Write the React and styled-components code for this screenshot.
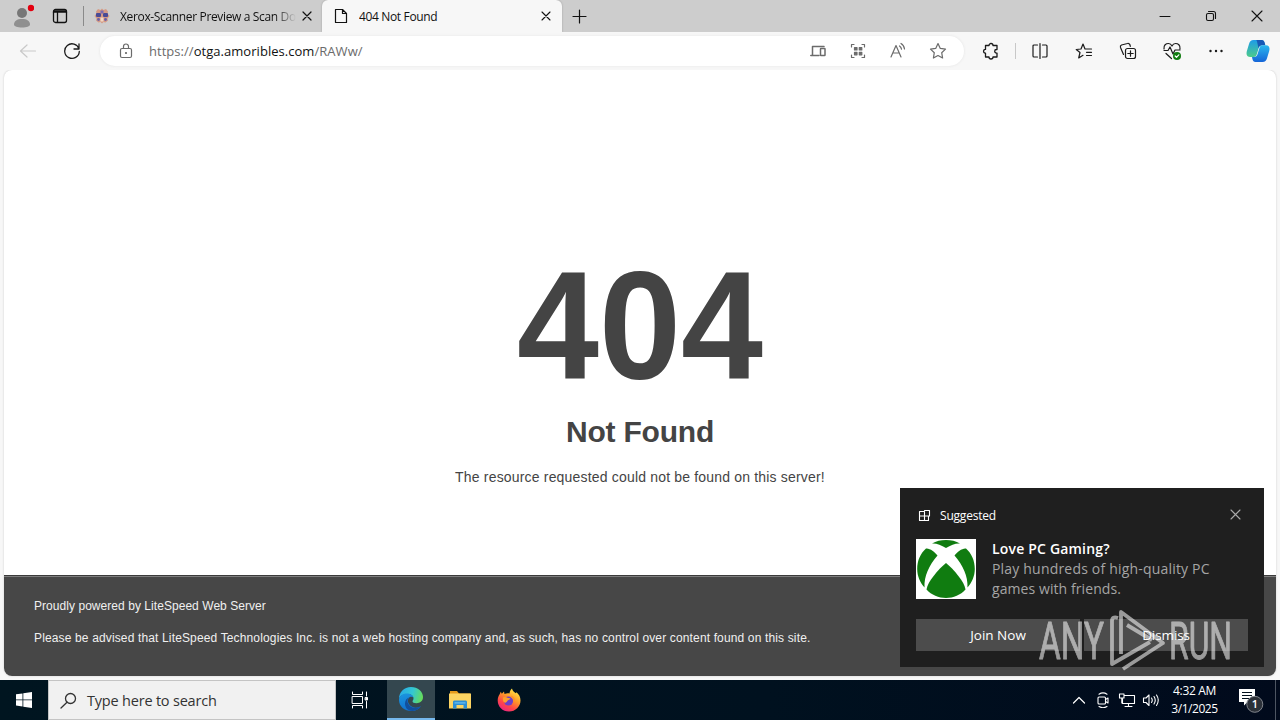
import React from 'react';
import styled, { createGlobalStyle } from 'styled-components';

const GlobalStyle = createGlobalStyle`
    * {
        box-sizing: border-box;
    }
    body {
        margin: 0;
        overflow: hidden;
        font-family: "Open Sans", "Noto Sans", sans-serif;
    }
    button {
        font-family: inherit;
    }
`

const Desktop = styled.div`
    width: 1280px;
    height: 720px;
    display: flex;
    flex-direction: column;
    position: relative;
    overflow: hidden;
    background-color: #f7f7f7;
`
const Slot = styled.div`
    width: ${({ $w }) => $w}px;
    height: 100%;
    flex-shrink: 0;
    display: flex;
    align-items: center;
    justify-content: center;
    color: ${({ $color }) => $color || 'inherit'};
`
const Label = styled.span`
    font-size: ${({ $size }) => $size || 12}px;
    letter-spacing: ${({ $spacing }) => $spacing || 0}px;
    color: ${({ $color }) => $color || 'inherit'};
    font-weight: ${({ $weight }) => $weight || 400};
    white-space: nowrap;
`

/* browser chrome */
const TabBar = styled.div`
    height: 32px;
    display: flex;
    background-color: #cdcdcd;
    color: #111;
`
const TabDivider = styled.div`
    width: 1px;
    height: 20px;
    margin: 6px 0 0 1px;
    background-color: #8a8a8a;
`
const Tab = styled.div`
    width: ${({ $w }) => $w}px;
    height: 32px;
    padding-left: ${({ $active }) => ($active ? 11 : 10)}px;
    display: flex;
    align-items: center;
    background-color: ${({ $active }) => ($active ? '#f7f7f7' : 'transparent')};
    border-radius: 6px 6px 0 0;
    box-shadow: ${({ $active }) => ($active ? '0 0 2px #999' : 'none')};
`
const TabTitle = styled.div`
    width: ${({ $w }) => $w}px;
    margin-left: ${({ $gap }) => $gap}px;
    overflow: hidden;
    display: flex;
    mask-image: ${({ $fade }) => ($fade ? 'linear-gradient(90deg, #000 88%, transparent)' : 'none')};
`
const WindowControls = styled.div`
    display: flex;
    margin-left: auto;
`
const Toolbar = styled.div`
    height: 38px;
    padding: 0 2px 0 6px;
    display: flex;
    align-items: center;
    background-color: #f7f7f7;
    color: #1b1b1b;
    position: relative;
`
const AddressBar = styled.div`
    width: 864px;
    height: 30px;
    margin: 0 5px 0 6px;
    padding: 0 6px;
    display: flex;
    align-items: center;
    border-radius: 15px;
    background-color: #fff;
    box-shadow: 0 0 3px #e4e4e4;
    color: #6b6b6b;
`
const Url = styled.div`
    margin-left: 3px;
    padding-bottom: 1px;
    flex: 1;
    line-height: 20px;
`
const ToolDivider = styled.div`
    width: 1px;
    height: 16px;
    margin: 0 2px;
    background-color: #c8c8c8;
`

/* page */
const Viewport = styled.div`
    height: 606px;
    margin: 0 4px;
    display: flex;
    flex-direction: column;
    border-radius: 8px;
    overflow: hidden;
    background-color: #fff;
    box-shadow: 0 0 2px #c4c4c4;
    color: #444;
    font-family: "Liberation Sans", Arial, sans-serif;
    font-size: 14px;
    line-height: 20px;
`
const Message = styled.div`
    flex: 1;
    padding-top: 182px;
    text-align: center;
`
const Code = styled.h1`
    margin: 0;
    font-size: 150px;
    line-height: 150px;
    font-weight: bold;
    transform: scale(0.982, 1.03);
    transform-origin: 50% 126px;
`
const Reason = styled.h2`
    margin: 20px 0 25px;
    font-size: 30px;
    letter-spacing: -0.2px;
`
const Detail = styled.p`
    margin: 0;
    letter-spacing: 0.18px;
`
const Footer = styled.div`
    height: 101px;
    padding: 20px 30px 0;
    background-color: #474747;
    border-top: 1px solid #3b3b3b;
    box-shadow: 0 1px 0 rgba(255, 255, 255, 0.3) inset;
    color: #f0f0f0;
    font-size: 12px;
`
const FooterLine = styled.p`
    margin: 0 0 12px;
    letter-spacing: ${({ $spacing }) => $spacing || 0}px;
`

/* notification */
const Toast = styled.div`
    width: 364px;
    height: 179px;
    padding: 0 16px;
    position: absolute;
    right: 16px;
    top: 488px;
    background-color: #1f1f1f;
    color: #fff;
`
const ToastHead = styled.div`
    height: 51px;
    padding: 3px 7px 0 2px;
    display: flex;
    align-items: center;
    gap: 9px;
`
const ToastClose = styled.div`
    margin-left: auto;
    margin-top: -1px;
    display: flex;
    color: #aaa;
`
const ToastBody = styled.div`
    display: flex;
    gap: 16px;
`
const ToastText = styled.div`
    display: flex;
    flex-direction: column;
    line-height: 20px;
`
const ToastActions = styled.div`
    margin-top: 20px;
    display: flex;
    gap: 4px;
`
const ToastButton = styled.button`
    width: 164px;
    height: 32px;
    padding: 0;
    border: none;
    background-color: #4c4c4c;
    color: #fff;
`
const Watermark = styled.svg`
    position: absolute;
    left: 1030px;
    top: 600px;
    overflow: visible;
    opacity: 0.55;
`

/* taskbar */
const Taskbar = styled.div`
    height: 40px;
    margin-top: 4px;
    display: flex;
    background: linear-gradient(90deg, #001520, #00111f 60%, #010a1c);
    color: #fff;
`
const SearchBox = styled.div`
    width: 288px;
    padding-left: 11px;
    display: flex;
    align-items: center;
    gap: 10px;
    background-color: #f1f1f1;
    border: 1px solid #c4c4c4;
    color: #333;
`
const TaskButton = styled(Slot)`
    margin-left: ${({ $gap }) => $gap}px;
    background-color: ${({ $active }) => ($active ? '#34474f' : 'transparent')};
    border-bottom: ${({ $active }) => ($active ? '2px solid #76b9ed' : 'none')};
`
const Tray = styled.div`
    display: flex;
    margin-left: auto;
`
const Clock = styled.div`
    width: 63px;
    display: flex;
    flex-direction: column;
    align-items: center;
    justify-content: center;
    line-height: 18px;
    padding-bottom: 1px;
`
const ShowDesktop = styled.div`
    width: 5px;
    border-left: 1px solid #4d5562;
`

function Icon({ w = 20, h, children, sw = 1.2 }) {
    return (
        <svg width={w} height={h || w} viewBox={`0 0 ${w} ${h || w}`} fill="none" stroke="currentColor" strokeWidth={sw} strokeLinecap="round" strokeLinejoin="round">
            {children}
        </svg>
    );
}

const Cross = ({ size = 9, sw = 1.2 }) => (
    <Icon w={size + 2} sw={sw}><path d={`M1 1 L${size + 1} ${size + 1} M${size + 1} 1 L1 ${size + 1}`} /></Icon>
);

const Avatar = () => (
    <svg width="24" height="28" viewBox="0 0 24 28">
        <circle cx="12" cy="11" r="5" fill="#777" />
        <path d="M4 22.500c0-3.500 3-5.500 8-5.500s8 2 8 5.500c0 2-3.500 3-8 3s-8-1-8-3z" fill="#8f8f8f" />
        <circle cx="21" cy="6" r="3.200" fill="#e3000f" />
    </svg>
);

const Favicon = () => (
    <svg width="16" height="16" viewBox="0 0 16 16">
        <path d="M2 3.500 4 1l2.500 1L8 .5 9.500 2 12 1l2 2.500-.5 2L15.500 8l-2 2.500.5 2-2.500 2-2-.5L8 15.500 6.500 14l-2 .5-2.500-2 .5-2L.5 8l2-2.500z" fill="#d59a84" />
        <rect x="2" y="5" width="5" height="4" rx="1" fill="#4a4b96" />
        <rect x="9" y="5" width="5" height="4" rx="1" fill="#4a4b96" />
        <rect x="6.500" y="2.500" width="3" height="3" fill="#7b6bb0" />
        <rect x="6.500" y="9.500" width="3" height="4" fill="#f1d8c4" />
        <circle cx="4.500" cy="11.500" r="1.400" fill="#6960a8" />
        <circle cx="11.500" cy="11.500" r="1.400" fill="#6960a8" />
    </svg>
);

const Copilot = () => (
    <svg width="24" height="24" viewBox="0 0 24 24">
        <defs>
            <linearGradient id="cpa" x1="0" y1="0" x2="0" y2="1">
                <stop offset="0" stopColor="#1e9be8" />
                <stop offset="1" stopColor="#4ccb8b" />
            </linearGradient>
            <linearGradient id="cpb" x1="0" y1="0" x2="0" y2="1">
                <stop offset="0" stopColor="#2bb8ee" />
                <stop offset="1" stopColor="#1565d8" />
            </linearGradient>
        </defs>
        <path d="M7.500 1h8c1.800 0 2.700 1.200 3.200 3l.6 2.200h-3.100c-2 0-3 1-3.600 3l-1.700 5.800c-.6 1.800-1.300 3-3.400 3H4C1 18 0 15.500.8 12.300L3 5C3.800 2.300 5 1 7.500 1z" fill="url(#cpa)" />
        <path d="M15.500 1c1.800 0 2.700 1.200 3.200 3l.6 2.200h-3.100c-2 0-3 .7-3.700 3L11 2.500C10.800 1.700 10.500 1 9.800 1z" fill="#1859b5" />
        <path d="M16.500 23h-7c-1.800 0-2.600-1.200-3.100-3L6 18h2c2 0 3-1 3.600-3l1.700-5.800c.6-1.800 1.400-3 3.400-3H20c3.100 0 4.100 2.500 3.200 5.700l-2.100 7c-.8 2.600-2 4.100-4.600 4.100z" fill="url(#cpb)" />
    </svg>
);

const Edge = () => (
    <svg width="26" height="26" viewBox="0 0 26 26">
        <defs>
            <linearGradient id="eda" x1="0" y1="0.300" x2="1" y2="0.500">
                <stop offset="0" stopColor="#27a9e8" />
                <stop offset="0.550" stopColor="#34c7d2" />
                <stop offset="1" stopColor="#66dc5a" />
            </linearGradient>
            <linearGradient id="edb" x1="0" y1="0" x2="0.300" y2="1">
                <stop offset="0" stopColor="#1b97e0" />
                <stop offset="1" stopColor="#1170cf" />
            </linearGradient>
        </defs>
        <path d="M1 13C1 6 6 1 13 1s12 4.600 12 10c0 4-3 6.200-6.500 6.200-2.600 0-4-.9-4-2 0-.7 1-1.200 1-3C15.500 9.500 12.500 8 9 8c-4.500 0-7.500 2.500-8 5z" fill="url(#eda)" />
        <path d="M1 14c0-4 3.500-6.500 7.800-6.500 3.500 0 6.200 1.800 6.600 4-1-.9-2.300-1.100-3.400-.6-2.400 1.200-2.700 4.700-.9 7.300 2.500 3.600 7.400 4.600 11.900 2.100C21 23.400 17.500 25 13.500 25 6.500 25 1 20.500 1 14z" fill="url(#edb)" />
        <path d="M11.500 11.200c-2.500 1.500-2.500 5-.6 7.500 2.600 3.500 7.600 4.200 11.700 1.800-1.900 2.700-5 4.300-8 4.400C9.500 25 7 21.500 7 17.500c0-3 1.700-5.500 4.500-6.300z" fill="#124f9d" />
    </svg>
);

const Explorer = () => (
    <svg width="22" height="20" viewBox="0 0 22 20">
        <path d="M1 1h7l2 2.500h11V7H1z" fill="#e59b1c" />
        <path d="M0 3.500h22v15H0z" fill="#fcd462" />
        <path d="M4 12c0-1 .7-1.500 1.500-1.500h11c.8 0 1.500.5 1.500 1.500v6.500h-3.500V15h-7v3.500H4z" fill="#2c8fd6" />
        <path d="M5.500 12.300h11v1.200h-11z" fill="#6cc0f0" />
    </svg>
);

const Firefox = () => (
    <svg width="24" height="24" viewBox="0 0 24 24">
        <defs>
            <linearGradient id="ffa" x1="0.800" y1="0" x2="0.200" y2="1">
                <stop offset="0" stopColor="#fff04a" />
                <stop offset="0.400" stopColor="#ff9a28" />
                <stop offset="0.700" stopColor="#ff4648" />
                <stop offset="1" stopColor="#e8208a" />
            </linearGradient>
        </defs>
        <path d="M2.500 6.500 3.800 3.800l1 2L7 3.500l.5 2.500c1.500-.8 3.500-1 5-.6.2-2 1-3.500 2.500-4.900.4 2.500 2 3.200 3.800 4.800l.7-1C22 6.500 23.500 9 23.500 12.500c0 6-5 11-11.500 11S.7 18.700.7 12.500c0-2.500.7-4.300 1.800-6z" fill="url(#ffa)" />
        <circle cx="11.500" cy="13" r="4.600" fill="#6d40c8" />
        <path d="M6 9.500c1.500-1 3.500-.5 5 .5l2.200.3c.4 1-1.200 1.700-2.200 1.900-.8.600-.8 1.600-2.200 2.300C6.500 15.500 5.500 12 6 9.500z" fill="#ffa02c" />
        <path d="M14 8.500c2.500 1 3.500 3.300 2.800 5.500" stroke="#ff9128" strokeWidth="1.500" fill="none" />
    </svg>
);

/* green ball showing through the X: cap, two sides, bottom lobe */
const Xbox = () => (
    <svg width="60" height="60" viewBox="0 0 60 60">
        <rect width="60" height="60" fill="#fff" />
        <g fill="#107c10">
            <path d="M16 4.500C20 2 25 1 30 1s10 1 14 3.500C40 4 35 6 30 9 25 6 20 4 16 4.500z" />
            <path d="M10 9.500c4-.5 8.500 3.500 11.500 7C13 26.500 8 37 8.500 48.500 4 43.500 1.200 37 1.200 30 1.200 21.500 4.500 14.500 10 9.500z" />
            <path d="M50 9.500c-4-.5-8.500 3.500-11.500 7C47 26.500 52 37 51.500 48.500c4.500-5 7.300-11.500 7.300-18.500 0-8.500-3.300-15.500-8.800-20.500z" />
            <path d="M30 24c8 6.500 18.500 19 19.500 26.500C44.500 56 37.500 59 30 59s-14.500-3-19.500-8.500C11.500 43 22 30.500 30 24z" />
        </g>
    </svg>
);

const Bell = () => (
    <svg width="26" height="26" viewBox="0 0 26 26">
        <path d="M1 2h16v13H9.500L6 18.500V15H1z" fill="#fff" />
        <path d="M4 5.500h10M4 8.500h10M4 11.500h7" stroke="#02101e" strokeWidth="1.200" />
        <circle cx="16.800" cy="17.300" r="8" fill="#2b3038" stroke="#82868d" strokeWidth="1" />
        <text x="16.800" y="21.300" fontSize="11" fontWeight="600" fill="#fff" textAnchor="middle">1</text>
    </svg>
);

function Tabs() {
    return (
        <TabBar>
            <Slot $w={44}><Avatar /></Slot>
            <Slot $w={32}>
                <Icon w={16} sw={1.300}>
                    <rect x="1.500" y="1.500" width="13" height="13" rx="2" />
                    <path d="M1.500 4.200h13M2 3h12M5.500 5v9" />
                </Icon>
            </Slot>
            <Slot $w={6} />
            <TabDivider />
            <Tab $w={238}>
                <Favicon />
                <TabTitle $w={176} $gap={10} $fade>
                    <Label $spacing={-0.35}>Xerox-Scanner Preview a Scan Document</Label>
                </TabTitle>
                <Slot $w={22}><Cross size={8} /></Slot>
            </Tab>
            <Tab $w={240} $active>
                <Icon w={16} sw={1.200}>
                    <path d="M3 1.500h6.500l4 4v9H2.500v-13zM9.500 1.500v4h4" />
                </Icon>
                <TabTitle $w={176} $gap={10}>
                    <Label $spacing={-0.350}>404 Not Found</Label>
                </TabTitle>
                <Slot $w={22}><Cross size={8} sw={1.100} /></Slot>
            </Tab>
            <Slot $w={35}>
                <Icon w={15}><path d="M7.500 1v13M1 7.500h13" /></Icon>
            </Slot>
            <WindowControls>
                <Slot $w={46}><Icon w={12} sw={1}><path d="M1 6.500h10" /></Icon></Slot>
                <Slot $w={46}>
                    <Icon w={12} sw={1.100}>
                        <rect x="1.500" y="3.500" width="7" height="7" rx="1.500" />
                        <path d="M3.500 1.500h5c1.500 0 2 .5 2 2v5" />
                    </Icon>
                </Slot>
                <Slot $w={46}><Cross size={10} sw={1.100} /></Slot>
            </WindowControls>
        </TabBar>
    );
}

function Tools() {
    return (
        <Toolbar>
            <Slot $w={44} $color="#c9c9c9">
                <Icon w={18}><path d="M1.500 9h15M8 3 1.500 9 8 15" /></Icon>
            </Slot>
            <Slot $w={44}>
                <Icon w={18} sw={1.300}><path d="M16 7A7.300 7.300 0 1 0 16.300 9.500M16 2v5h-5" /></Icon>
            </Slot>
            <AddressBar>
                <Slot $w={40}>
                    <Icon w={16}>
                        <rect x="2.500" y="5.500" width="11" height="9" rx="1.500" />
                        <path d="M5.500 5.500V3.500a2.500 2.500 0 0 1 5 0v2" />
                        <circle cx="8" cy="10" r="0.500" fill="currentColor" />
                    </Icon>
                </Slot>
                <Url>
                    <Label $size={13} $spacing={0.04}>https://</Label>
                    <Label $size={13} $spacing={0.04} $color="#111">otga.amoribles.com</Label>
                    <Label $size={13} $spacing={0.04}>/RAWw/</Label>
                </Url>
                <Slot $w={40}>
                    <Icon w={16} sw={1.500}>
                        <path d="M2.500 11.500V3.500h11.500M.8 12.500h8.200" />
                        <rect x="10.500" y="5.500" width="4.500" height="7" rx="0.500" />
                    </Icon>
                </Slot>
                <Slot $w={40}>
                    <Icon w={16}>
                        <path d="M1.500 4V1.500H4M12 1.500h2.500V4M14.500 12v2.500H12M4 14.500H1.500V12" />
                        <path d="M4.500 4.500h2.500v2.500H4.500zM9.300 4.500h2.500v2.500H9.300zM4.500 9.300h2.500v2.500H4.500zM9.300 9.300h2.500v2.500H9.300z" fill="currentColor" />
                    </Icon>
                </Slot>
                <Slot $w={40}>
                    <Icon w={18}>
                        <path d="M2 15 7 3.500 12 15M3.800 11h6.400M10.500 4c1.200.8 1.800 1.800 2 3.200M12 1.500c2 1.200 3.200 3 3.500 5.500" />
                    </Icon>
                </Slot>
                <Slot $w={40}>
                    <Icon w={18}>
                        <path d="m9 1.500 2.300 4.900 5.200.7-3.800 3.600.9 5.300L9 13.500 4.400 16l.9-5.300L1.500 7.100l5.200-.7z" />
                    </Icon>
                </Slot>
            </AddressBar>
            <Slot $w={44}>
                <Icon w={18} sw={1.300}>
                    <path d="M3.500 3.500H7a2 2 0 0 1 4 0h4v4h-.5a1.800 1.800 0 0 0 0 3.600h.5v3.900h-4a2 2 0 0 1-4 0H3.500v-3.900H3a1.900 1.900 0 0 1 0-3.700h.5z" />
                </Icon>
            </Slot>
            <ToolDivider />
            <Slot $w={44}>
                <Icon w={18}>
                    <path d="M9 1.500v15M6.500 3H3a1 1 0 0 0-1 1v10a1 1 0 0 0 1 1h3.500M11.500 3H15a1 1 0 0 1 1 1v10a1 1 0 0 1-1 1h-3.500" />
                </Icon>
            </Slot>
            <Slot $w={44}>
                <Icon w={18}>
                    <path d="M10 7H16.500M11.500 10.300h5M11.500 13.500h5M10 7 8 2 6 7l-4.800.5L5 10.500l-1.300 5.500L8 13.300" />
                </Icon>
            </Slot>
            <Slot $w={44}>
                <Icon w={18}>
                    <rect x="6.500" y="6.500" width="10" height="10" rx="2" />
                    <path d="M11.500 8.800v5.400M8.800 11.500h5.400M4.500 12.500 1.500 5.500a2 2 0 0 1 1-2.500l6-1.500a2 2 0 0 1 2.500 1.500l.3 1.300" />
                </Icon>
            </Slot>
            <Slot $w={44}>
                <Icon w={20} sw={1.200}>
                    <path d="M2 8C1.500 4 4 2.500 6.500 2.500 8.500 2.500 9.500 4 10 5c.5-1 1.500-2.500 3.500-2.500C16 2.500 18.500 4 18 8M2 9.500h4L8 6l3 7 2-4h5M4 12.500l5.500 5" />
                    <circle cx="15" cy="15" r="4" fill="#107c10" stroke="none" />
                    <path d="m13.200 15 1.300 1.300 2.300-2.500" stroke="#fff" />
                </Icon>
            </Slot>
            <Slot $w={44}>
                <Icon w={16}>
                    <path d="M2.500 8h.01M8 8h.01M13.500 8h.01" strokeWidth="2.400" />
                </Icon>
            </Slot>
            <Slot $w={40}><Copilot /></Slot>
        </Toolbar>
    );
}

function Notification() {
    return (
        <Toast>
            <ToastHead>
                <Icon w={13} sw={1.100}>
                    <path d="M1.500 2.500h5v9h-5zM1.500 7h5M6.500 1.500h5v5.500h-5M6.500 11.500h4V7" />
                </Icon>
                <Label $spacing={-0.2}>Suggested</Label>
                <ToastClose><Cross size={9} sw={1.100} /></ToastClose>
            </ToastHead>
            <ToastBody>
                <Xbox />
                <ToastText>
                    <Label $size={14} $weight={600} $spacing={0.18}>Love PC Gaming?</Label>
                    <Label $size={14} $color="#a5a5a5" $spacing={0.19}>Play hundreds of high-quality PC</Label>
                    <Label $size={14} $color="#a5a5a5" $spacing={0.08}>games with friends.</Label>
                </ToastText>
            </ToastBody>
            <ToastActions>
                <ToastButton><Label $size={13.5}>Join Now</Label></ToastButton>
                <ToastButton><Label $size={13.5} $spacing={-0.1}>Dismiss</Label></ToastButton>
            </ToastActions>
        </Toast>
    );
}

function App() {
    return (
        <>
            <GlobalStyle />
            <Desktop>
                <Tabs />
                <Tools />
                <Viewport>
                    <Message>
                        <Code>404</Code>
                        <Reason>Not Found</Reason>
                        <Detail>The resource requested could not be found on this server!</Detail>
                    </Message>
                    <Footer>
                        <FooterLine $spacing={0.05}>Proudly powered by LiteSpeed Web Server</FooterLine>
                        <FooterLine $spacing={0.143}>Please be advised that LiteSpeed Technologies Inc. is not a web hosting company and, as such, has no control over content found on this site.</FooterLine>
                    </Footer>
                </Viewport>
                <Taskbar>
                    <Slot $w={48}>
                        <svg width="16" height="16" viewBox="0 0 16 16" fill="#fff">
                            <path d="M0 2.300 6.500 1.400v6.100H0zM7.300 1.300 16 0v7.500H7.300zM0 8.300h6.500v6.200L0 13.600zM7.300 8.300H16V16l-8.700-1.300z" />
                        </svg>
                    </Slot>
                    <SearchBox>
                        <Icon w={17} sw={1.300}>
                            <circle cx="10.500" cy="6.500" r="5" />
                            <path d="M7 10.200 1 16" />
                        </Icon>
                        <Label $size={14.5} $spacing={-0.2}>Type here to search</Label>
                    </SearchBox>
                    <Slot $w={48}>
                        <Icon w={18} sw={1}>
                            <path d="M1.500 1v2.500h10V1M1.500 17v-2.500h10V17M1.500 5.500h10v7h-10zM15.500 1v4M15.500 10.500V17" />
                            <path d="M14.500 6.500h2v2.500h-2z" fill="#fff" />
                        </Icon>
                    </Slot>
                    <TaskButton $w={48} $gap={3} $active><Edge /></TaskButton>
                    <TaskButton $w={48} $gap={1}><Explorer /></TaskButton>
                    <TaskButton $w={48} $gap={1}><Firefox /></TaskButton>
                    <Tray>
                        <Slot $w={24}><Icon w={14}><path d="M1.500 10 7 4.500l5.500 5.500" /></Icon></Slot>
                        <Slot $w={24}>
                            <Icon w={16} sw={1.100}>
                                <rect x="3" y="5" width="7.500" height="7" rx="1" />
                                <path d="m10.500 7.500 2.500-1.500v5l-2.500-1.500M4 2.200Q8 -.5 12 2.200M4 14.500q4 2.500 8 0" />
                            </Icon>
                        </Slot>
                        <Slot $w={24}>
                            <Icon w={18} h={16} sw={1.100}>
                                <path d="M6 3.500h10.500v8H4.500V7M10.500 11.500v3M7 14.500h7M1.500 2h4.500v4h-4.500zM3.800 6v5" />
                            </Icon>
                        </Slot>
                        <Slot $w={24}>
                            <Icon w={18} h={16} sw={1.100}>
                                <path d="M1.500 6H4l3-3v10.500l-3-3H1.500zM9.500 6q1.500 2.200 0 4.500M12 4.500q2.500 3.700 0 7.500M14.500 3q3.500 5 0 10.500" />
                            </Icon>
                        </Slot>
                        <Clock>
                            <Label $spacing={-0.35}>4:32 AM</Label>
                            <Label $spacing={-0.45}>3/1/2025</Label>
                        </Clock>
                        <Slot $w={49}><Bell /></Slot>
                        <ShowDesktop />
                    </Tray>
                </Taskbar>
                <Notification />
                <Watermark width="220" height="80" viewBox="0 0 220 80" fill="none" stroke="#fff" strokeWidth="3.800" strokeLinejoin="round">
                    <g fill="#fff" strokeWidth="0.900" fontFamily="Roboto, sans-serif" fontSize="52">
                        <text x="9" y="59" textLength="65" lengthAdjust="spacingAndGlyphs">ANY</text>
                        <text x="139" y="59" textLength="63" lengthAdjust="spacingAndGlyphs">RUN</text>
                    </g>
                    <path d="M88 18q-6-2-6 3v43l38-22M91 54V12l42 31-40 26" />
                    <path d="M97 25l25 15" />
                </Watermark>
            </Desktop>
        </>
    );
}

export default App;
